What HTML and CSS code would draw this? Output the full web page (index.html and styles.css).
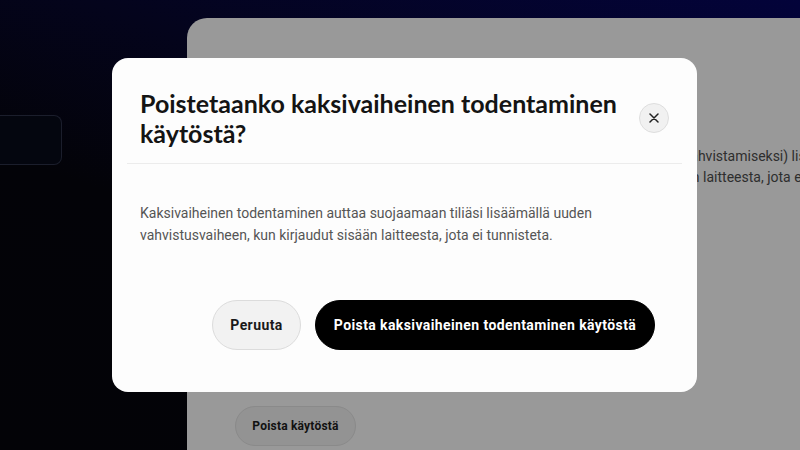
FILE: index.html
```html
<!DOCTYPE html>
<html lang="fi">
<head>
    <meta charset="UTF-8">
    <meta name="viewport" content="width=device-width, initial-scale=1.0">
    <title>Kaksivaiheinen todentaminen</title>
    <link rel="stylesheet" href="styles.css">
</head>
<body>
    <div class="page">
        <aside class="sidebar">
            <div class="side-field"></div>
        </aside>

        <main class="panel">
            <p class="panel-text">Kaksivaiheinen todentaminen tuo ylimääräisen suojauskerroksen (koodi vahvistamiseksi) lisäksi<br>salasanasi lisäksi, kun kirjaudut sisään verkkoselaimella tai toisen henkilön laitteesta, jota ei tunnisteta.</p>
            <button class="panel-btn">Poista käytöstä</button>
        </main>
    </div>

    <div class="modal" role="dialog">
        <div class="modal-header">
            <h2>Poistetaanko kaksivaiheinen todentaminen käytöstä?</h2>
            <button class="close-btn" aria-label="Sulje">
                <svg width="10" height="10" viewBox="0 0 10 10"><path d="M1 1L9 9M9 1L1 9" stroke="#222" stroke-width="1.5" stroke-linecap="round"/></svg>
            </button>
        </div>
        <div class="modal-body">
            <p>Kaksivaiheinen todentaminen auttaa suojaamaan tiliäsi lisäämällä uuden vahvistusvaiheen, kun kirjaudut sisään laitteesta, jota ei tunnisteta.</p>
        </div>
        <div class="modal-footer">
            <button class="btn-secondary">Peruuta</button>
            <button class="btn-primary">Poista kaksivaiheinen todentaminen käytöstä</button>
        </div>
    </div>
</body>
</html>
```

FILE: styles.css
```css
* {
    box-sizing: border-box;
}

body {
    margin: 0;
    width: 800px;
    height: 450px;
    overflow: hidden;
    font-family: Roboto, 'Noto Sans', sans-serif;
    background: linear-gradient(200deg, #03033a 0%, #04041c 35%, #030308 60%, #030307 100%);
}

.page {
    display: flex;
    height: 450px;
}

.sidebar {
    width: 187px;
    flex-shrink: 0;
    padding-top: 115px;
}

.side-field {
    width: 62px;
    height: 50px;
    border: 1px solid #1b1e2c;
    border-left: none;
    border-radius: 0 8px 8px 0;
    background: #04060f;
}

.panel {
    flex: 1;
    margin-top: 18px;
    background: #999999;
    border-radius: 20px 0 0 0;
    padding: 128px 0 0 48px;
    overflow: hidden;
}

.panel-text {
    margin: 0;
    white-space: nowrap;
    font-size: 14px;
    line-height: 21px;
    color: #2e2e2e;
}

.panel-btn {
    margin-top: 218px;
    height: 40px;
    width: 121px;
    padding: 0;
    border: 1px solid #8a8a8a;
    border-radius: 20px;
    background: #939393;
    font-family: inherit;
    font-size: 12px;
    font-weight: 700;
    letter-spacing: 0.2px;
    color: #111;
}

.modal {
    position: absolute;
    left: 112px;
    top: 58px;
    width: 585px;
    height: 334px;
    background: #fdfdfd;
    border-radius: 16px;
    display: flex;
    flex-direction: column;
}

.modal-header {
    display: flex;
    align-items: center;
    justify-content: space-between;
    margin: 0 15px;
    padding: 30px 13px 15px 13px;
    border-bottom: 1px solid #ececec;
}

.modal-header h2 {
    margin: 0;
    width: 480px;
    font-family: Lato, Roboto, sans-serif;
    font-size: 25px;
    line-height: 30px;
    font-weight: 700;
    color: #141414;
}

.close-btn {
    width: 30px;
    height: 30px;
    flex-shrink: 0;
    border-radius: 50%;
    border: 1px solid #dedede;
    background: #f1f1f1;
    display: flex;
    align-items: center;
    justify-content: center;
    padding: 0;
}

.modal-body {
    padding: 38px 28px 0 28px;
    flex: 1;
}

.modal-body p {
    margin: 0;
    width: 470px;
    font-size: 14px;
    line-height: 22px;
    color: #555;
}

.modal-footer {
    display: flex;
    justify-content: flex-end;
    gap: 14px;
    padding: 0 42px 42px 0;
}

.modal-footer button {
    height: 50px;
    border-radius: 25px;
    font-family: inherit;
    font-size: 14px;
    font-weight: 700;
    letter-spacing: 0.4px;
    padding: 0;
    white-space: nowrap;
}

.btn-secondary {
    width: 89px;
    background: #f2f2f2;
    border: 1px solid #dcdcdc;
    color: #1a1a1a;
}

.btn-primary {
    width: 340px;
    background: #000;
    border: 1px solid #000;
    color: #fff;
}
```
